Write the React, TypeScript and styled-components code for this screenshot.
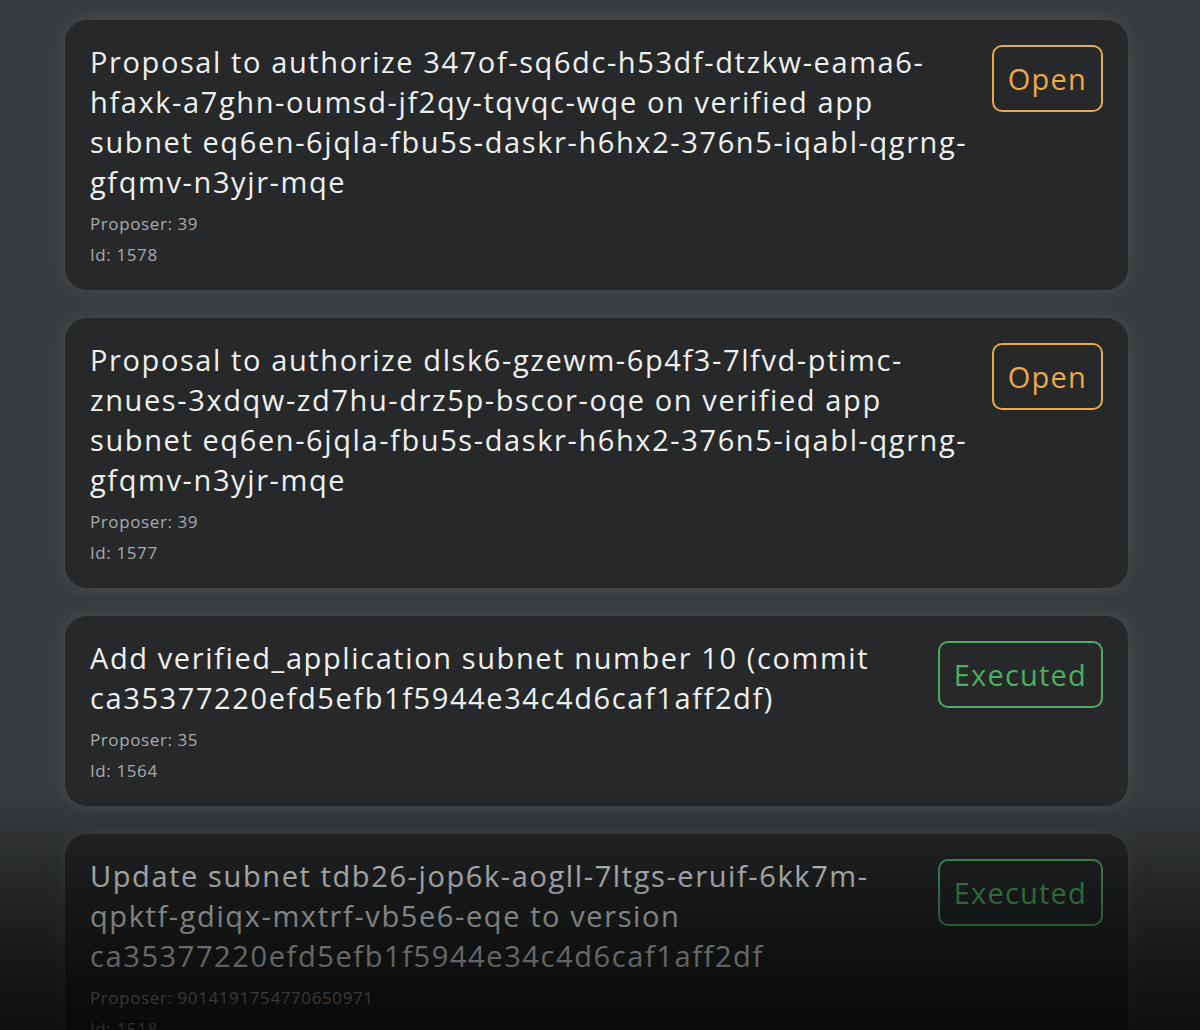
import styled, { createGlobalStyle } from "styled-components";

const GlobalStyle = createGlobalStyle`
  html, body {
    margin: 0;
    padding: 0;
    background: #393c3e;
  }
  body {
    font-family: "Open Sans", "Noto Sans", sans-serif;
    -webkit-font-smoothing: antialiased;
  }
`;

type Status = "Open" | "Executed";

interface Proposal {
  id: number;
  title: string;
  proposer: string;
  status: Status;
}

const proposals: Proposal[] = [
  {
    id: 1578,
    title:
      "Proposal to authorize 347of-sq6dc-h53df-dtzkw-eama6-hfaxk-a7ghn-oumsd-jf2qy-tqvqc-wqe on verified app subnet eq6en-6jqla-fbu5s-daskr-h6hx2-376n5-iqabl-qgrng-gfqmv-n3yjr-mqe",
    proposer: "39",
    status: "Open",
  },
  {
    id: 1577,
    title:
      "Proposal to authorize dlsk6-gzewm-6p4f3-7lfvd-ptimc-znues-3xdqw-zd7hu-drz5p-bscor-oqe on verified app subnet eq6en-6jqla-fbu5s-daskr-h6hx2-376n5-iqabl-qgrng-gfqmv-n3yjr-mqe",
    proposer: "39",
    status: "Open",
  },
  {
    id: 1564,
    title:
      "Add verified_application subnet number 10 (commit ca35377220efd5efb1f5944e34c4d6caf1aff2df)",
    proposer: "35",
    status: "Executed",
  },
  {
    id: 1518,
    title:
      "Update subnet tdb26-jop6k-aogll-7ltgs-eruif-6kk7m-qpktf-gdiqx-mxtrf-vb5e6-eqe to version ca35377220efd5efb1f5944e34c4d6caf1aff2df",
    proposer: "9014191754770650971",
    status: "Executed",
  },
];

const statusColor: Record<Status, string> = {
  Open: "#eaa94b",
  Executed: "#4cae5f",
};

const Page = styled.div`
  min-height: 1030px;
  padding: 20px 72px 40px 65px;
  box-sizing: border-box;
`;

const List = styled.div`
  display: flex;
  flex-direction: column;
  gap: 28px;
`;

const Card = styled.div`
  display: flex;
  justify-content: space-between;
  align-items: flex-start;
  gap: 18px;
  background: #262829;
  border-radius: 22px;
  padding: 22px 25px 23px 25px;
  box-shadow: 0 0 18px rgba(88, 94, 98, 0.55);
`;

const Body = styled.div`
  flex: 1;
  min-width: 0;
`;

const Title = styled.div`
  font-size: 29px;
  line-height: 40px;
  letter-spacing: 1.6px;
  color: #eef0ef;
`;

const Meta = styled.div`
  font-size: 17px;
  line-height: 24px;
  letter-spacing: 0.6px;
  color: #a9abab;
  margin-top: 7px;

  &:nth-of-type(2) {
    margin-top: 10px;
  }
`;

const Badge = styled.div<{ $color: string }>`
  flex: none;
  margin-top: 3px;
  height: 67px;
  box-sizing: border-box;
  display: flex;
  align-items: center;
  padding: 0 14px;
  border: 2px solid ${({ $color }) => $color};
  border-radius: 10px;
  color: ${({ $color }) => $color};
  font-size: 29px;
  letter-spacing: 1.2px;
`;

const Fade = styled.div`
  position: fixed;
  left: 0;
  right: 0;
  bottom: 0;
  height: 235px;
  pointer-events: none;
  background: linear-gradient(
    to bottom,
    rgba(0, 0, 0, 0) 0%,
    rgba(0, 0, 0, 0.38) 40%,
    rgba(0, 0, 0, 0.62) 75%,
    rgba(0, 0, 0, 0.75) 100%
  );
`;

const App = () => {
  return (
    <>
      <GlobalStyle />
      <Page>
        <List>
          {proposals.map((p) => (
            <Card key={p.id}>
              <Body>
                <Title>{p.title}</Title>
                <Meta>Proposer: {p.proposer}</Meta>
                <Meta>Id: {p.id}</Meta>
              </Body>
              <Badge $color={statusColor[p.status]}>{p.status}</Badge>
            </Card>
          ))}
        </List>
      </Page>
      <Fade />
    </>
  );
};

export default App;
